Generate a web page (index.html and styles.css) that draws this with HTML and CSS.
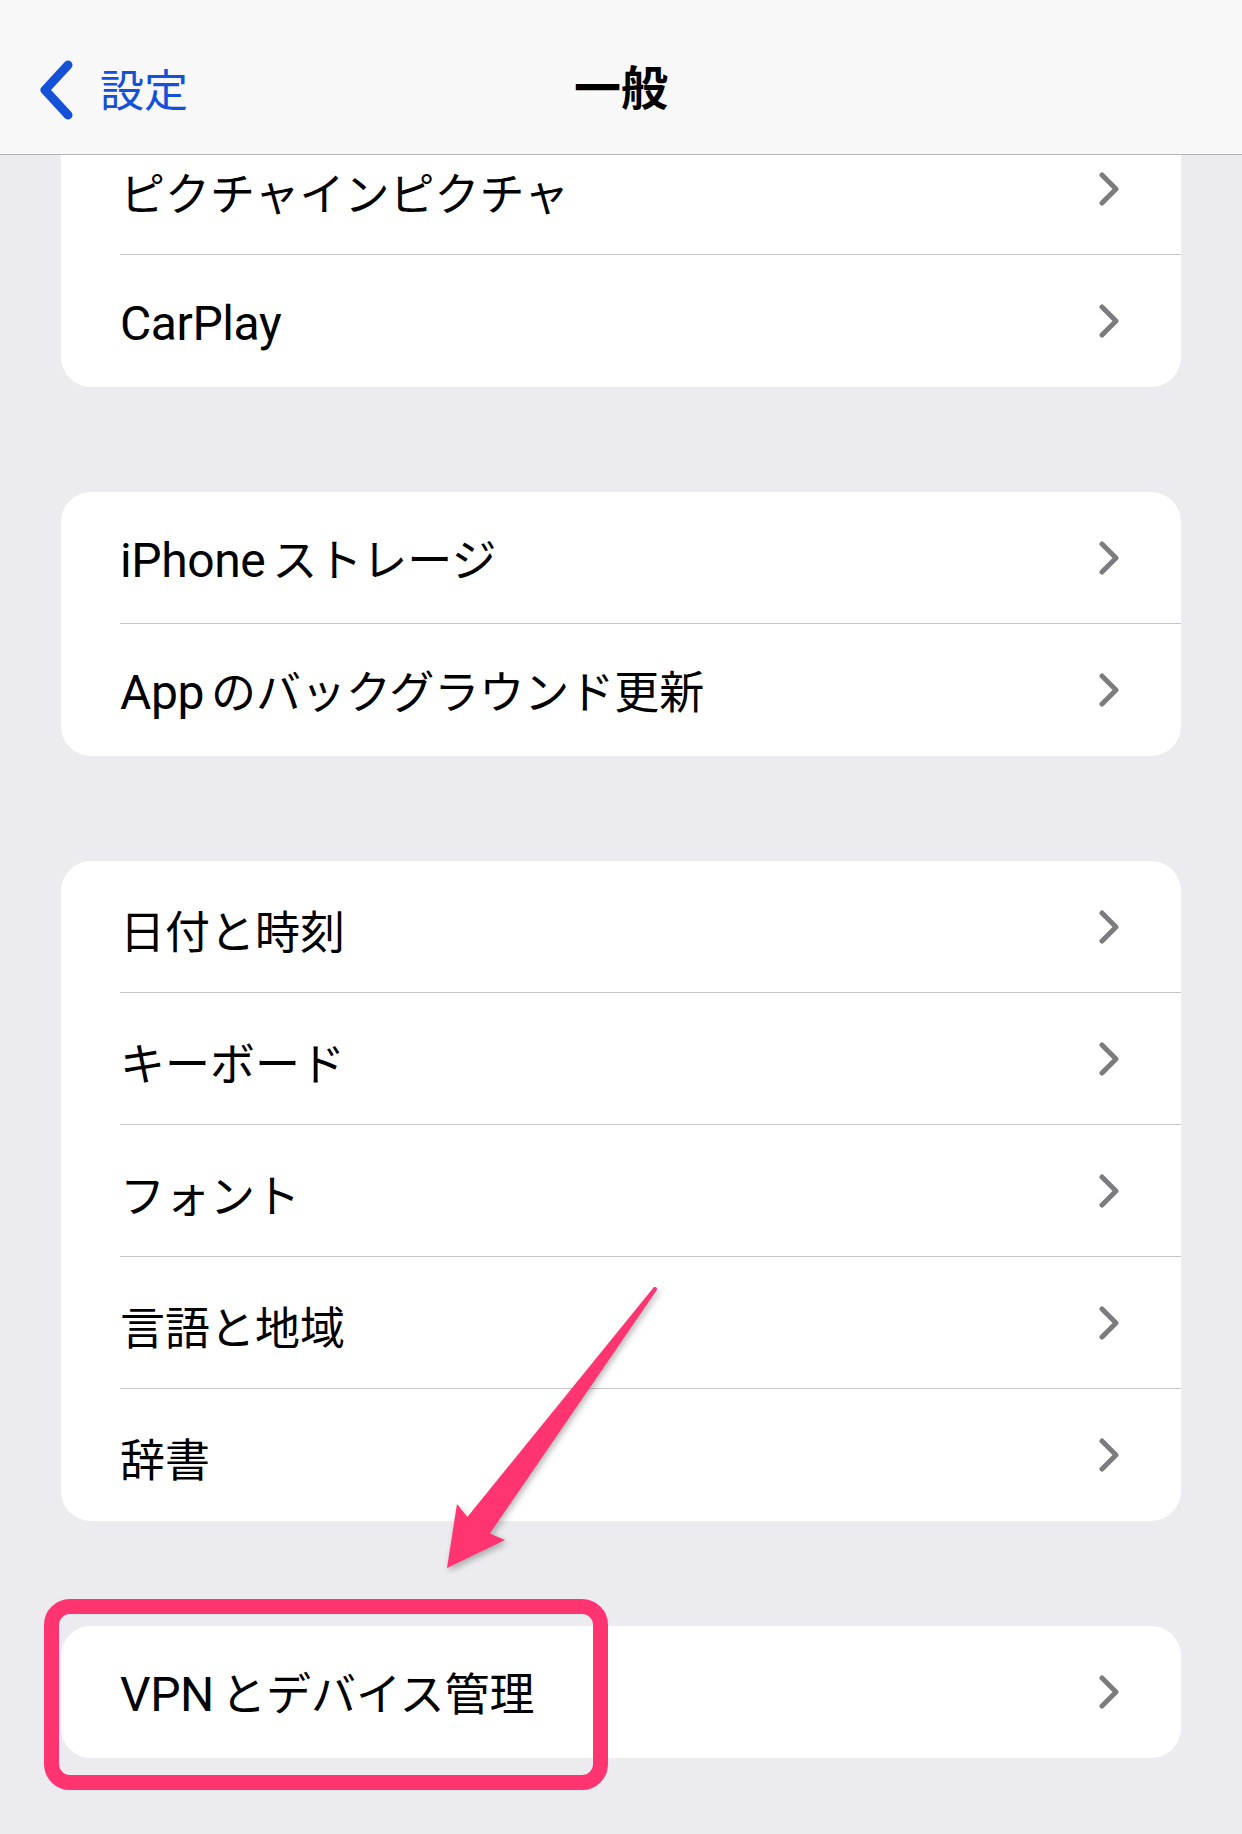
FILE: index.html
```html
<!DOCTYPE html>
<html lang="ja">
<head>
<meta charset="utf-8">
<title>一般</title>
<link rel="stylesheet" href="styles.css">
</head>
<body>
<div class="screen">
  <header class="nav">
    <div class="back">
      <svg class="back-icon" width="36" height="60" viewBox="0 0 36 60"><path d="M30 5 L7 30 L30 55" fill="none" stroke="#1450d8" stroke-width="9" stroke-linecap="round" stroke-linejoin="round"/></svg>
      <span class="back-label">設定</span>
    </div>
    <h1 class="title">一般</h1>
    <div class="nav-spacer"></div>
  </header>

  <main class="content">
    <section class="group first">
      <div class="row"><div class="row-inner"><span class="label">ピクチャインピクチャ</span><span class="chev"></span></div></div>
      <div class="row"><div class="row-inner sep"><span class="label"><span class="en">CarPlay</span></span><span class="chev"></span></div></div>
    </section>

    <section class="group">
      <div class="row"><div class="row-inner"><span class="label"><span class="en gap">iPhone</span>ストレージ</span><span class="chev"></span></div></div>
      <div class="row"><div class="row-inner sep"><span class="label"><span class="en gap">App</span>のバックグラウンド更新</span><span class="chev"></span></div></div>
    </section>

    <section class="group">
      <div class="row"><div class="row-inner"><span class="label">日付と時刻</span><span class="chev"></span></div></div>
      <div class="row"><div class="row-inner sep"><span class="label">キーボード</span><span class="chev"></span></div></div>
      <div class="row"><div class="row-inner sep"><span class="label">フォント</span><span class="chev"></span></div></div>
      <div class="row"><div class="row-inner sep"><span class="label">言語と地域</span><span class="chev"></span></div></div>
      <div class="row"><div class="row-inner sep"><span class="label">辞書</span><span class="chev"></span></div></div>
    </section>

    <section class="group">
      <div class="row"><div class="row-inner"><span class="label"><span class="en gap">VPN</span>とデバイス管理</span><span class="chev"></span></div></div>
    </section>
  </main>

  <div class="highlight"></div>
  <svg class="arrow" width="1242" height="1834" viewBox="0 0 1242 1834">
    <path d="M653.4 1287.8 L467.4 1516.9 L457 1504 L447 1568 L505 1540 L489.8 1533.5 L656.6 1290.2 A2 2 0 0 0 653.4 1287.8 Z" fill="#ff3470"/>
  </svg>
</div>
</body>
</html>
```
FILE: styles.css
```css
html, body {
  margin: 0;
  padding: 0;
}
body {
  width: 1242px;
  height: 1834px;
  background: #ebebf0;
  font-family: Roboto, "Noto Sans CJK JP", sans-serif;
  color: #000;
  overflow: hidden;
}
.screen {
  position: relative;
  width: 1242px;
  height: 1834px;
}
.nav {
  box-sizing: border-box;
  height: 155px;
  padding-top: 21px;
  background: #f8f8f8;
  border-bottom: 1px solid #b4b4b6;
  display: grid;
  grid-template-columns: 1fr auto 1fr;
  align-items: center;
  position: relative;
  z-index: 2;
}
.back {
  display: flex;
  align-items: center;
  padding-left: 38px;
  gap: 26px;
}
.back-icon {
  display: block;
  margin-top: 4px;
}
.back-label {
  font-family: "Noto Sans CJK JP", sans-serif;
  font-size: 44px;
  color: #1450d8;
  line-height: 1;
}
.title {
  margin: 0 0 6px;
  font-family: "Noto Sans CJK JP", sans-serif;
  font-weight: 700;
  font-size: 47px;
  line-height: 1;
}
.content {
  height: 1679px;
  overflow: hidden;
  padding: 0 61px;
  display: flex;
  flex-direction: column;
  gap: 105px;
}
.group {
  background: #fff;
  border-radius: 30px;
  display: flex;
  flex-direction: column;
}
.group.first {
  margin-top: -32px;
}
.row {
  height: 132px;
  padding-left: 59px;
  display: flex;
}
.row-inner {
  flex: 1;
  display: flex;
  align-items: center;
  justify-content: space-between;
  padding-left: 0;
  padding-right: 61px;
}
.row-inner.sep {
  border-top: 1px solid #c6c6c8;
  margin-top: -1px;
}
.label {
  font-family: "Noto Sans CJK JP", sans-serif;
  font-size: 45px;
  line-height: 1;
  white-space: nowrap;
  padding-top: 4px;
}
.en {
  font-family: Roboto, sans-serif;
  font-size: 48px;
  letter-spacing: -0.4px;
}
.en.gap {
  margin-right: 7px;
}
.chev {
  width: 20px;
  height: 34px;
  margin-right: 1px;
  background: no-repeat center / 20px 34px url("data:image/svg+xml,%3Csvg xmlns='http://www.w3.org/2000/svg' width='20' height='34' viewBox='0 0 20 34'%3E%3Cpath d='M3 3 L17 17 L3 31' fill='none' stroke='%237b7b80' stroke-width='5' stroke-linecap='round' stroke-linejoin='round'/%3E%3C/svg%3E");
}
.highlight {
  position: absolute;
  left: 44px;
  top: 1599px;
  width: 564px;
  height: 191px;
  box-sizing: border-box;
  border: 15px solid #ff3470;
  border-radius: 26px;
  z-index: 3;
}
.arrow {
  position: absolute;
  left: 0;
  top: 0;
  z-index: 3;
  pointer-events: none;
  filter: drop-shadow(2px 3px 3px rgba(0, 0, 0, 0.28));
}
```
